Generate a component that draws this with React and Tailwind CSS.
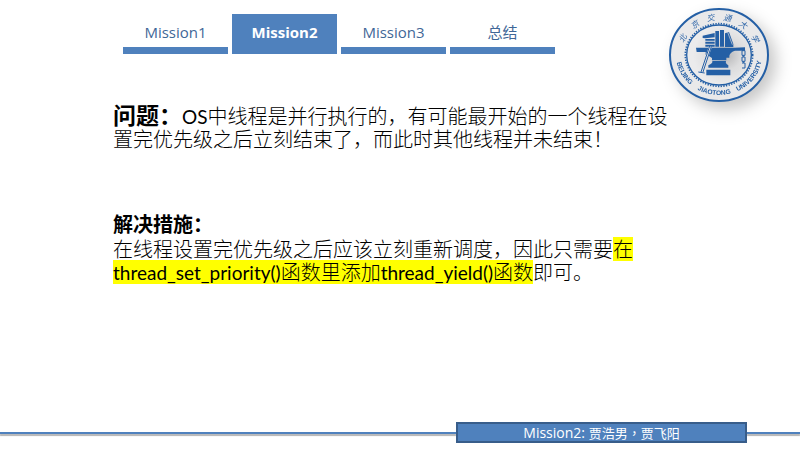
import React from "react";

const tabs = ["Mission1", "Mission2", "Mission3", "总结"];

function Tab({ label, active }) {
  return (
    <button
      type="button"
      role="tab"
      aria-selected={active}
      className={
        active
          ? "h-10 border-b-[7px] border-[#4f81bd] bg-[#4f81bd] pt-1 text-[15px] font-bold text-white"
          : "h-10 border-b-[7px] border-[#4f81bd] pt-1 text-[15px] text-[#3f6797]"
      }
    >
      {label}
    </button>
  );
}

function Seal() {
  return (
    <svg
      viewBox="0 0 300 282"
      role="img"
      aria-label="Beijing Jiaotong University"
      className="h-[94px] w-[100px] shrink-0 overflow-visible drop-shadow-[7px_7px_8px_rgba(0,0,0,0.22)]"
    >
      <defs>
        <radialGradient id="face" cx="0.6" cy="0.5" r="0.5">
          <stop offset="0" stopColor="#b4b4b6" />
          <stop offset="0.5" stopColor="#dcdcdd" />
          <stop offset="1" stopColor="#ebebec" />
        </radialGradient>
        <path id="topArc" d="M 38 141 A 112 105 0 0 1 262 141" />
        <path id="bottomArc" d="M 21 141 A 129 120 0 0 0 279 141" />
      </defs>
      <ellipse cx="150" cy="141" rx="147" ry="138" fill="#e9e9ea" stroke="#245fa5" strokeWidth="6" />
      <ellipse cx="150" cy="141" rx="97" ry="90" fill="url(#face)" stroke="#245fa5" strokeWidth="4" />
      <ellipse cx="150" cy="141" rx="101" ry="94" fill="none" stroke="#245fa5" strokeWidth="5" strokeDasharray="4 4" />
      <g fill="#2d65a8" fontFamily="'Noto Sans CJK SC', sans-serif" fontSize="24" fontStyle="italic" fontWeight="400" textAnchor="middle">
        <text><textPath href="#topArc" startOffset="14%">北</textPath></text>
        <text><textPath href="#topArc" startOffset="29%">京</textPath></text>
        <text><textPath href="#topArc" startOffset="43%">交</textPath></text>
        <text><textPath href="#topArc" startOffset="57%">通</textPath></text>
        <text><textPath href="#topArc" startOffset="71%">大</textPath></text>
        <text><textPath href="#topArc" startOffset="86%">学</textPath></text>
      </g>
      <g fill="#245fa5" fontFamily="'Liberation Sans', sans-serif" fontSize="20" fontWeight="700" textAnchor="middle">
        <text><textPath href="#bottomArc" startOffset="16%">BEIJING</textPath></text>
        <text><textPath href="#bottomArc" startOffset="46%">JIAOTONG</textPath></text>
        <text><textPath href="#bottomArc" startOffset="80%">UNIVERSITY</textPath></text>
      </g>
      <g fill="#245fa5">
        <path d="M101 83 L137 75 V88 L109 91 L101 90 Z M109 93 H137 V98 H109 Z M109 101 H137 V107 H109 Z M109 110 H137 V116 H109 Z" />
        <path d="M139 69 H150 V116 H139 Z M153 66 H165 V116 H153 Z M168 76 L180 72 L193 108 V117 H168 Z" />
        <path d="M81 119 H198 L228 118 V128 H198 Q184 132 181 143 V149 H172 V157 H129 V150 Q120 142 110 140 V132 L83 132 Z" />
        <path d="M130 159 H171 Q168 166 178 172 V179 H118 V172 Q132 166 130 159 Z M112 185 H184 V202 H112 Z" />
      </g>
      <path d="M124 116 L99 190" stroke="#e4e4e6" strokeWidth="9" />
      <path d="M122 114 L96 192 M127 116 L102 192 M88 192 L107 195" fill="none" stroke="#245fa5" strokeWidth="3" />
      <path d="M176 73 L190 110" stroke="#dededf" strokeWidth="2" />
      <g fill="none" stroke="#245fa5" strokeWidth="3">
        <path d="M219 128 H228 V142 H219 Z M223 142 V147 M219 147 H228 V160 H219 Z M223 160 V165 M219 165 H228 V180 H219" />
      </g>
    </svg>
  );
}

export default function App() {
  return (
    <div
      lang="zh-CN"
      className="flex min-h-screen flex-col overflow-hidden bg-white font-['Open_Sans','Noto_Sans_CJK_SC',sans-serif] text-black"
    >
      <header className="flex items-start justify-between pr-[31px] pl-[123px]">
        <nav role="tablist" aria-label="Missions" className="mt-3.5 grid w-[432px] grid-cols-4 gap-1">
          {tabs.map((label) => (
            <Tab key={label} label={label} active={label === "Mission2"} />
          ))}
        </nav>
        <div className="pt-2">
          <Seal />
        </div>
      </header>

      <main className="grow pt-0.5 pr-[130px] pl-[113px] font-['Lato','Noto_Sans_CJK_SC',sans-serif] text-[20px] leading-[23px] font-light">
        <section>
          <p>
            <strong className="text-[23px] font-bold">问题：</strong>
            <span className="text-[19px] font-normal">OS</span>
            中线程是并行执行的，有可能最开始的一个线程在设
            <br />
            置完优先级之后立刻结束了，而此时其他线程并未结束！
          </p>
        </section>
        <section className="mt-[62px]">
          <h2 className="mb-0.5 font-bold">解决措施：</h2>
          <p>
            在线程设置完优先级之后应该立刻重新调度，因此只需要
            <mark className="bg-[#ffff00] text-black">
              在
              <br />
              <span className="text-[19px] font-normal">thread_set_priority()</span>
              函数里添加
              <span className="text-[19px] font-normal">thread_yield()</span>
              函数
            </mark>
            即可。
          </p>
        </section>
      </main>

      <footer className="mb-[7px] flex items-center">
        <div className="h-0.5 grow bg-[#4f81bd] shadow-[0_2px_1px_rgba(0,0,0,0.3)]" />
        <p className="flex h-[21px] w-[291px] items-center justify-center border-2 border-[#385d8a] bg-[#4f81bd] text-[13px] text-white">
          <span className="text-[14px] whitespace-pre">Mission2: </span>
          <span lang="zh-TW" className="font-['Noto_Sans_CJK_TC',sans-serif]">贾浩男，贾飞阳</span>
        </p>
        <div className="h-0.5 w-[53px] bg-[#4f81bd] shadow-[0_2px_1px_rgba(0,0,0,0.3)]" />
      </footer>
    </div>
  );
}
